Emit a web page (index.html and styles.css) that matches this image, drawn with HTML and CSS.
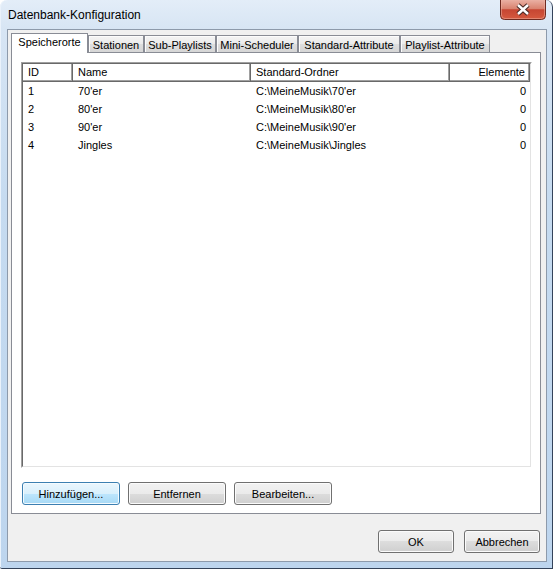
FILE: index.html
```html
<!DOCTYPE html>
<html>
<head>
<meta charset="utf-8">
<title>Datenbank-Konfiguration</title>
<link rel="stylesheet" href="styles.css">
</head>
<body>
<div class="window">
  <div class="titlebar">
    <span class="title">Datenbank-Konfiguration</span>
    <div class="close">
      <svg width="46" height="20" viewBox="0 0 46 20">
        <defs>
          <linearGradient id="cg" x1="0" y1="0" x2="0" y2="1">
            <stop offset="0" stop-color="#eab0a3"/>
            <stop offset="0.45" stop-color="#d9826f"/>
            <stop offset="0.5" stop-color="#c64632"/>
            <stop offset="1" stop-color="#d65a40"/>
          </linearGradient>
        </defs>
        <path d="M0.5 0 V15.5 Q0.5 19.5 4.5 19.5 H41.5 Q45.5 19.5 45.5 15.5 V0" fill="url(#cg)" stroke="#6e2a20"/>
        <path d="M1.5 0 V15 Q1.5 18.5 5 18.5 H41 Q44.5 18.5 44.5 15 V0" fill="none" stroke="#f0b3a3" stroke-opacity="0.5"/>
        <path d="M18 5 L28 14 M28 5 L18 14" stroke="#4a2a26" stroke-width="4.6"/>
        <path d="M18 5 L28 14 M28 5 L18 14" stroke="#ffffff" stroke-width="2.4"/>
      </svg>
    </div>
  </div>
  <div class="client">
    <div class="tabs">
      <div class="tab active t1">Speicherorte</div>
      <div class="tab t2">Stationen</div>
      <div class="tab t3">Sub-Playlists</div>
      <div class="tab t4">Mini-Scheduler</div>
      <div class="tab t5">Standard-Attribute</div>
      <div class="tab t6">Playlist-Attribute</div>
    </div>
    <div class="panel">
      <div class="list">
        <div class="list-in">
          <div class="row head">
            <div class="hc">ID</div>
            <div class="hc">Name</div>
            <div class="hc">Standard-Ordner</div>
            <div class="hc num">Elemente</div>
          </div>
          <div class="row">
            <div class="c">1</div>
            <div class="c">70'er</div>
            <div class="c">C:\MeineMusik\70'er</div>
            <div class="c num">0</div>
          </div>
          <div class="row">
            <div class="c">2</div>
            <div class="c">80'er</div>
            <div class="c">C:\MeineMusik\80'er</div>
            <div class="c num">0</div>
          </div>
          <div class="row">
            <div class="c">3</div>
            <div class="c">90'er</div>
            <div class="c">C:\MeineMusik\90'er</div>
            <div class="c num">0</div>
          </div>
          <div class="row">
            <div class="c">4</div>
            <div class="c">Jingles</div>
            <div class="c">C:\MeineMusik\Jingles</div>
            <div class="c num">0</div>
          </div>
        </div>
      </div>
      <div class="btnrow">
        <button class="btn focus">Hinzufügen...</button>
        <button class="btn">Entfernen</button>
        <button class="btn">Bearbeiten...</button>
      </div>
    </div>
    <div class="dlgbtns">
      <button class="btn dlg">OK</button>
      <button class="btn dlg">Abbrechen</button>
    </div>
  </div>
</div>
</body>
</html>
```
FILE: styles.css
```css
html, body {
  margin: 0;
  padding: 0;
}
body {
  width: 553px;
  height: 569px;
  overflow: hidden;
  font-family: "Liberation Sans", Arial, sans-serif;
  font-size: 11px;
  color: #000;
  background: #ffffff;
}
.window {
  box-sizing: border-box;
  width: 553px;
  height: 569px;
  padding: 0 5px 6px 7px;
  display: flex;
  flex-direction: column;
  background: linear-gradient(180deg, #e3edf8 0px, #d7e5f4 29px, #c6dbf0 200px, #bdd5ee 569px);
  border-right: 1px solid #34435a;
  border-bottom: 1px solid #34435a;
  border-top-left-radius: 7px;
  border-top-right-radius: 7px;
  border-bottom-left-radius: 2px;
  box-shadow: inset 1px 0 #eaf2fb;
}
.titlebar {
  flex: none;
  height: 29px;
  display: flex;
  align-items: flex-start;
}
.title {
  padding: 8px 0 0 1px;
  font-size: 12px;
  line-height: 14px;
  color: #000;
}
.close {
  margin-left: auto;
  margin-right: 1px;
  width: 46px;
  height: 20px;
}
.close svg {
  display: block;
}
.client {
  flex: 1;
  display: flex;
  flex-direction: column;
  border: 1px solid #8d9aab;
  background: #f0f0f0;
}
.tabs {
  flex: none;
  height: 22px;
  display: flex;
  align-items: flex-end;
  padding-left: 3px;
  position: relative;
  z-index: 1;
}
.tab {
  box-sizing: border-box;
  height: 17px;
  border: 1px solid #898c95;
  border-bottom: none;
  padding-top: 1px;
  line-height: 16px;
  text-align: center;
  white-space: nowrap;
  background: linear-gradient(180deg, #f4f4f4 0%, #ebebeb 50%, #dedede 51%, #d6d6d6 100%);
  box-shadow: inset 1px 1px #fcfcfc;
}
.tab.active {
  height: 20px;
  margin-bottom: -1px;
  padding-top: 0;
  background: #ffffff;
  box-shadow: none;
}
.t1 { width: 77px; }
.t2 { width: 56px; }
.t3 { width: 72px; }
.t4 { width: 82px; }
.t5 { width: 102px; }
.t6 { width: 90px; }
.panel {
  flex: none;
  box-sizing: border-box;
  height: 462px;
  margin: 0 5px 0 3px;
  padding: 9px 8px 8px 9px;
  border: 1px solid #898c95;
  background: #ffffff;
  display: flex;
  flex-direction: column;
}
.list {
  box-sizing: border-box;
  height: 406px;
  border: 1px solid;
  border-color: #a0a0a0 #ffffff #ffffff #a0a0a0;
}
.list-in {
  box-sizing: border-box;
  height: 100%;
  border: 1px solid;
  border-color: #696969 #e3e3e3 #e3e3e3 #696969;
  background: #ffffff;
}
.row {
  display: grid;
  grid-template-columns: 50px 178px 199px 80px;
  height: 18px;
}
.c {
  padding-left: 5px;
  line-height: 18px;
  white-space: nowrap;
}
.hc {
  box-sizing: border-box;
  height: 18px;
  padding-left: 5px;
  line-height: 17px;
  white-space: nowrap;
  background: #ffffff;
  border-right: 1px solid #696969;
  border-bottom: 1px solid #696969;
  box-shadow: inset -1px -1px #a0a0a0;
}
.num {
  text-align: right;
  padding-left: 0;
  padding-right: 4px;
}
.btnrow {
  display: flex;
  gap: 8px;
  margin-top: 14px;
  padding-left: 1px;
}
.btn {
  box-sizing: border-box;
  width: 98px;
  height: 23px;
  padding: 0;
  margin: 0;
  border: 1px solid #707070;
  border-radius: 3px;
  background: linear-gradient(180deg, #f2f2f2 0%, #ebebeb 50%, #dddddd 50%, #cfcfcf 100%);
  box-shadow: inset 0 0 0 1px #fbfbfb;
  font-family: "Liberation Sans", Arial, sans-serif;
  font-size: 11px;
  color: #000;
}
.btn.focus {
  border-color: #3c7fb1;
  background: linear-gradient(180deg, #eaf6fd 0%, #d9f0fc 50%, #bee6fd 50%, #a7d9f5 100%);
  box-shadow: inset 0 0 0 1px #f4fbff;
}
.dlgbtns {
  display: flex;
  justify-content: flex-end;
  gap: 10px;
  margin-top: 16px;
  padding-right: 6px;
}
.btn.dlg {
  width: 76px;
}
```
